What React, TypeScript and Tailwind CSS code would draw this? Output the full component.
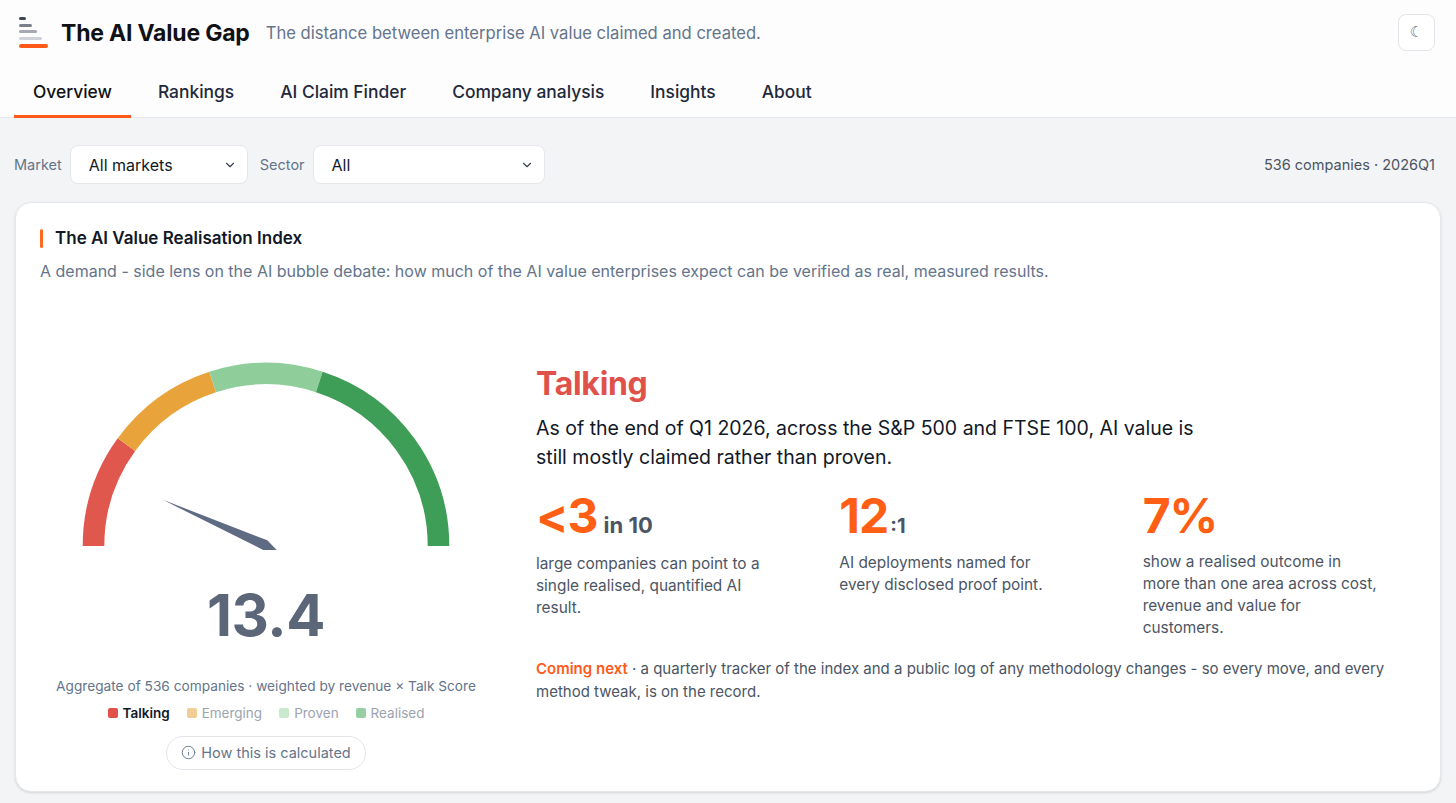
import { ChevronDown, Info } from 'lucide-react'

const tabs = ['Overview', 'Rankings', 'AI Claim Finder', 'Company analysis', 'Insights', 'About']

const segments = [
    { from: 0, to: 20, color: '#e0574e' },
    { from: 20, to: 40, color: '#e8a43b' },
    { from: 40, to: 60, color: '#8fce9b' },
    { from: 60, to: 100, color: '#3e9d56' },
]

const legend = [
    { label: 'Talking', swatch: 'bg-[#e0514a]', text: 'font-semibold text-[#111827]' },
    { label: 'Emerging', swatch: 'bg-[#f2cd95]', text: 'text-[#9ca3af]' },
    { label: 'Proven', swatch: 'bg-[#c8e9cc]', text: 'text-[#9ca3af]' },
    { label: 'Realised', swatch: 'bg-[#98cfa2]', text: 'text-[#9ca3af]' },
]

const CX = 190
const CY = 188
const R = 172.5

function point(v: number, r: number) {
    const t = Math.PI * (1 - v / 100)
    return [CX + r * Math.cos(t), CY - r * Math.sin(t)]
}

function arc(from: number, to: number) {
    const [x1, y1] = point(from, R)
    const [x2, y2] = point(to, R)
    return `M ${x1} ${y1} A ${R} ${R} 0 0 1 ${x2} ${y2}`
}

function Logo() {
    return (
        <div className="flex flex-col gap-[3.5px] w-[30px]">
            <div className="h-[3px] w-[7px] rounded-full bg-[#3f4756]" />
            <div className="h-[3px] w-[13px] rounded-full bg-[#7b818c]" />
            <div className="h-[3px] w-[18px] rounded-full bg-[#a4a9b2]" />
            <div className="h-[3px] w-[23px] rounded-full bg-[#cfd3d9]" />
            <div className="h-[3.5px] w-[29px] rounded-full bg-[#ff5a1a] mt-[1px]" />
        </div>
    )
}

function Gauge({ value }: { value: number }) {
    const [tx, ty] = point(value, 113)
    return (
        <svg width="380" height="192" viewBox="0 0 380 192">
            {segments.map((s) => (
                <path key={s.from} d={arc(s.from, s.to)} fill="none" stroke={s.color} strokeWidth="21.6" />
            ))}
            <polygon points={`${tx},${ty} 191.3,182.3 200.7,192 187.3,192`} fill="#5f6b82" />
        </svg>
    )
}

function FakeSelect({ value, width }: { value: string; width: string }) {
    return (
        <div className={`${width} h-[39px] flex items-center justify-between pl-[18px] pr-[10px] bg-white rounded-lg border border-[#e5e7eb] text-[16px] text-[#111827]`}>
            <span>{value}</span>
            <ChevronDown size={14} strokeWidth={2} className="text-[#374151]" />
        </div>
    )
}

export default function App() {
    return (
        <div className="min-h-screen bg-[#f3f4f6] font-['Inter','Noto_Sans',sans-serif] text-[#111827]">
            {/* header */}
            <header className="bg-[#fdfdfd] border-b border-[#e5e7eb]">
                <div className="flex items-center justify-between pl-[19px] pr-[21px] pt-[14px] pb-[14px]">
                    <div className="flex items-center">
                        <Logo />
                        <h1 className="ml-[12px] text-[23px] font-bold tracking-[-0.2px] text-[#0f1115] pt-[2px]">The AI Value Gap</h1>
                        <p className="ml-[16px] text-[16.6px] text-[#64748b] pt-[1px]">The distance between enterprise AI value claimed and created.</p>
                    </div>
                    <button className="w-[37px] h-[37px] rounded-lg border border-[#e2e5ea] bg-white flex items-center justify-center text-[15px] text-[#6b7280] font-['DejaVu_Sans',sans-serif]">
                        ☾
                    </button>
                </div>
                <nav className="flex gap-2 pl-[14px] h-[53px] -mb-px">
                    {tabs.map((t, i) => (
                        <div
                            key={t}
                            className={`px-[19px] flex items-center text-[17.4px] font-medium border-b-[3px] ${i === 0 ? 'border-[#ff5a1a] text-[#111]' : 'border-transparent text-[#1e293b]'}`}
                        >
                            <span className="mt-[4px]">{t}</span>
                        </div>
                    ))}
                </nav>
            </header>

            {/* filters */}
            <div className="flex items-center justify-between px-[14px] pt-[27px] pb-[18px]">
                <div className="flex items-center">
                    <span className="text-[14.5px] text-[#64748b] mr-[8px]">Market</span>
                    <FakeSelect value="All markets" width="w-[178px]" />
                    <span className="text-[14.5px] text-[#64748b] ml-[12px] mr-[8px]">Sector</span>
                    <FakeSelect value="All" width="w-[232px]" />
                </div>
                <span className="text-[14.5px] text-[#4b5563] pr-[7px]">536 companies · 2026Q1</span>
            </div>

            {/* index card */}
            <section className="mx-[15px] bg-white rounded-2xl border border-[#e5e7eb] shadow-sm px-[24px] pt-[23px] pb-[21px]">
                <div className="flex items-center">
                    <div className="w-[3px] h-[19px] rounded-full bg-[#ff6a1f]" />
                    <h2 className="ml-[12px] text-[17px] font-semibold text-[#111827]">The AI Value Realisation Index</h2>
                </div>
                <p className="mt-[8px] text-[16px] leading-[22px] text-[#64748b]">
                    A demand - side lens on the AI bubble debate: how much of the AI value enterprises expect can be verified as real, measured results.
                </p>

                <div className="flex mt-[76px]">
                    {/* gauge column */}
                    <div className="w-[452px] shrink-0 flex flex-col items-center">
                        <Gauge value={13.4} />
                        <div className="mt-[36px] text-[58px] leading-none font-bold text-[#5b6679] tracking-[-0.5px]">13.4</div>
                        <p className="mt-[32px] text-[13.7px] leading-[20px] text-[#64748b]">
                            Aggregate of 536 companies · weighted by revenue × Talk Score
                        </p>
                        <div className="mt-[7px] flex items-center gap-[17px] text-[13.5px] leading-[20px]">
                            {legend.map((l) => (
                                <div key={l.label} className="flex items-center gap-[5px]">
                                    <span className={`w-[10px] h-[10px] rounded-[2px] ${l.swatch}`} />
                                    <span className={l.text}>{l.label}</span>
                                </div>
                            ))}
                        </div>
                        <button className="mt-[13px] h-[34px] px-[14px] rounded-full border border-[#e2e5ea] flex items-center gap-[5px] text-[14.5px] text-[#64748b]">
                            <Info size={15} strokeWidth={1.5} />
                            How this is calculated
                        </button>
                    </div>

                    {/* summary column */}
                    <div className="pl-[44px] pt-[6px] flex-1">
                        <h3 className="text-[32px] leading-[40px] font-bold text-[#e0514a] tracking-[-0.3px]">Talking</h3>
                        <p className="mt-[10px] max-w-[670px] text-[19.5px] leading-[29px] text-[#111827]">
                            As of the end of Q1 2026, across the S&amp;P 500 and FTSE 100, AI value is still mostly claimed rather than proven.
                        </p>

                        <div className="mt-[20px] grid grid-cols-3 gap-[30px]">
                            <div>
                                <div className="flex items-baseline">
                                    <span className="text-[48px] leading-none font-bold text-[#ff5f15] tracking-[-1px]">&lt;3</span>
                                    <span className="ml-[6px] text-[22px] font-bold text-[#4b5563]">in 10</span>
                                </div>
                                <p className="mt-[11px] text-[15.4px] leading-[22px] text-[#4b5563]">
                                    large companies can point to a<br />single realised, quantified AI<br />result.
                                </p>
                            </div>
                            <div>
                                <div className="flex items-baseline">
                                    <span className="text-[48px] leading-none font-bold text-[#ff5f15] tracking-[-1px]">12</span>
                                    <span className="ml-[2px] text-[20px] font-bold text-[#4b5563]">:1</span>
                                </div>
                                <p className="mt-[11px] text-[15.4px] leading-[22px] text-[#4b5563]">
                                    AI deployments named for<br />every disclosed proof point.
                                </p>
                            </div>
                            <div>
                                <div className="flex items-baseline">
                                    <span className="text-[48px] leading-none font-bold text-[#ff5f15] tracking-[-1px]">7%</span>
                                </div>
                                <p className="mt-[11px] text-[15.4px] leading-[22px] text-[#4b5563]">
                                    show a realised outcome in<br />more than one area across cost,<br />revenue and value for<br />customers.
                                </p>
                            </div>
                        </div>

                        <p className="mt-[18px] max-w-[860px] text-[15px] leading-[23px] text-[#4b5563]">
                            <span className="font-semibold text-[#ff5a1a]">Coming next</span> · a quarterly tracker of the index and a public log of any methodology changes - so every move, and every method tweak, is on the record.
                        </p>
                    </div>
                </div>
            </section>
        </div>
    )
}
